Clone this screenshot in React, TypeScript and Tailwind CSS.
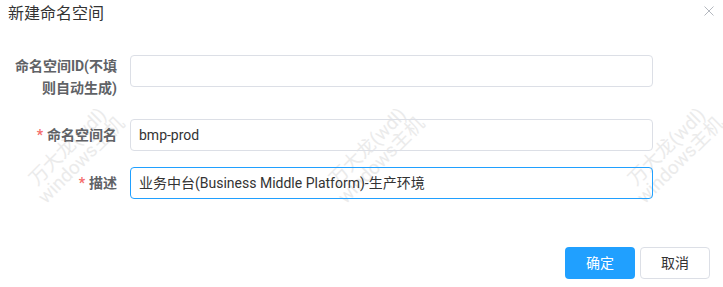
import React from "react";

const FONT = { fontFamily: 'Roboto, "Noto Sans CJK SC", sans-serif' };

function Watermark({ left }: { left: string }) {
  return (
    <div
      className={`pointer-events-none absolute top-[134px] ${left} w-[150px] h-[40px] -rotate-45 text-center text-[19px] leading-[19px] text-[#ebebeb] select-none`}
    >
      <div>万大龙(wdl)</div>
      <div>windows主机</div>
    </div>
  );
}

export default function App() {
  return (
    <div className="relative w-[723px] h-[287px] bg-white overflow-hidden" style={FONT}>
      <Watermark left="left-[0px]" />
      <Watermark left="left-[300px]" />
      <Watermark left="left-[599px]" />

      <div className="relative flex justify-between items-start pt-[3px] px-2">
        <div className="text-[16px] leading-[22px] text-[#333333]">新建命名空间</div>
        <svg width="10" height="10" viewBox="0 0 10 10" className="mt-[3px] mr-[1px]">
          <path d="M0.5 0.5 L9.5 9.5 M9.5 0.5 L0.5 9.5" stroke="#b4b8bf" strokeWidth="1" />
        </svg>
      </div>

      <div className="relative mt-[30px] flex flex-col">
        <div className="flex items-start">
          <div className="w-[130px] pr-[13px] text-right text-[14px] leading-[22px] font-bold text-[#606266]">
            命名空间ID(不填
            <br />
            则自动生成)
          </div>
          <div className="w-[523px] h-[32px] border border-[#dcdfe6] rounded-[4px]" />
        </div>

        <div className="flex items-start mt-[20px]">
          <div className="w-[130px] pr-[13px] text-right text-[14px] leading-[32px] font-bold text-[#606266]">
            <span className="text-[#f56c6c] mr-[4px]">*</span>命名空间名
          </div>
          <div className="w-[523px] h-[32px] border border-[#dcdfe6] rounded-[4px] px-2 flex items-center text-[14px] text-[#333333]">
            bmp-prod
          </div>
        </div>

        <div className="flex items-start mt-[16px]">
          <div className="w-[130px] pr-[13px] text-right text-[14px] leading-[32px] font-bold text-[#606266]">
            <span className="text-[#f56c6c] mr-[4px]">*</span>描述
          </div>
          <div className="w-[523px] h-[32px] border border-[#20a0ff] rounded-[4px] px-2 flex items-center text-[14px] text-[#333333]">
            业务中台(Business Middle Platform)-生产环境
          </div>
        </div>
      </div>

      <div className="relative mt-[48px] flex justify-end gap-[5px] pr-[13px]">
        <button className="w-[70px] h-[32px] rounded-[4px] bg-[#20a0ff] text-white text-[14px] flex items-center justify-center">
          确定
        </button>
        <button className="w-[70px] h-[32px] rounded-[4px] border border-[#dcdfe6] bg-white text-[#333333] text-[14px] flex items-center justify-center">
          取消
        </button>
      </div>
    </div>
  );
}
